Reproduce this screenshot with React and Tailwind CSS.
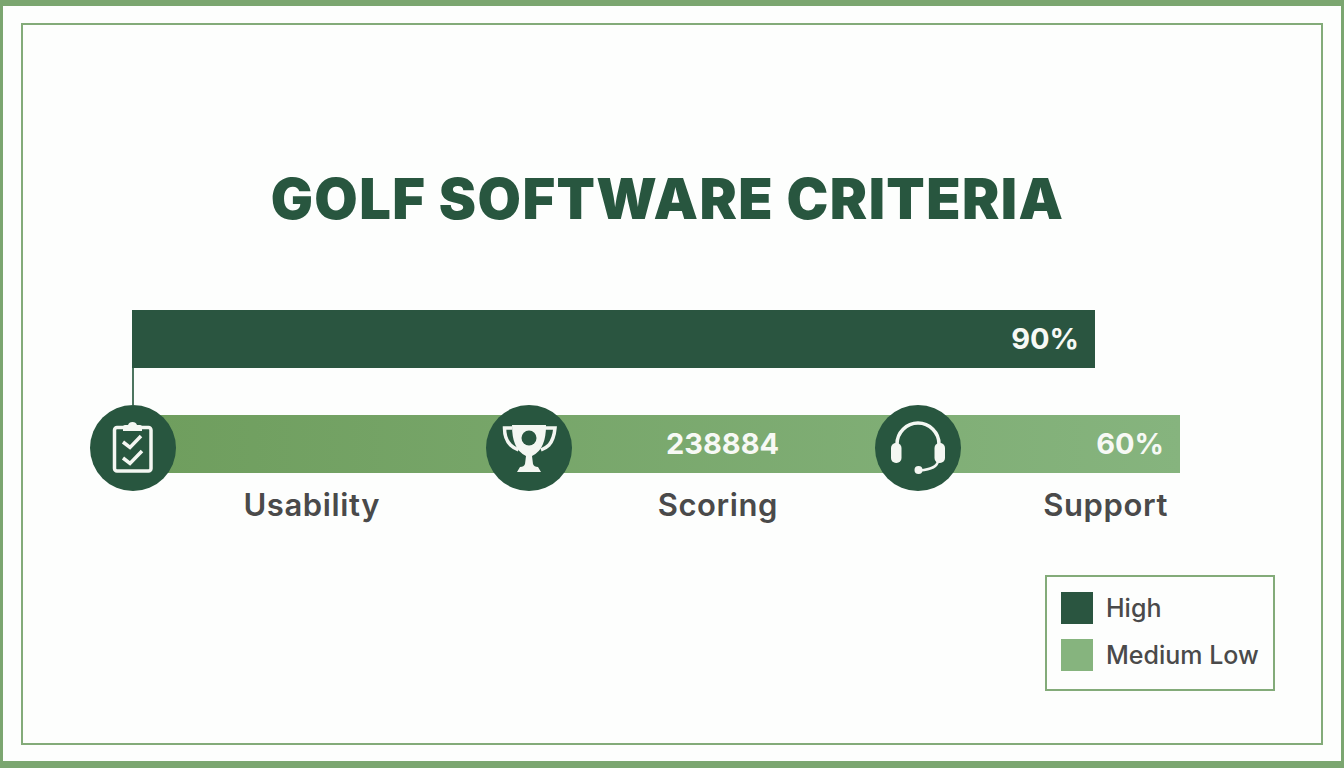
function ClipboardIcon() {
  return (
    <svg viewBox="0 0 86 86" className="h-full w-full" fill="none">
      <rect x="24.5" y="22.5" width="36.5" height="43.5" rx="2.5" stroke="#f4f7f2" strokeWidth="3.500" />
      <path d="M33 26v-4q0-2 2-2h3q1-3 4.500-3t4.500 3h3q2 0 2 2v4z" fill="#f4f7f2" />
      <path d="M33 37l7 5.500 11-11.500M33 53l7 5.500 12-12.500" stroke="#f4f7f2" strokeWidth="3.500" />
    </svg>
  );
}

function TrophyIcon() {
  return (
    <svg viewBox="0 0 86 86" className="h-full w-full" fill="none">
      <path d="M26 20h34q0 12-3 19-3 8-11 12l1 8q1 3 5 3l3 5H31l3-5q4 0 5-3l1-8q-8-4-11-12-3-7-3-19z" fill="#f4f7f2" />
      <circle cx="43" cy="33" r="7.500" fill="#28563f" />
      <path d="M26 23H18.500q0 11 6 17 3 3 8 5M59 23h10q-1 11-6 17-3 3-8 5" stroke="#f4f7f2" strokeWidth="3.500" />
    </svg>
  );
}

function HeadsetIcon() {
  return (
    <svg viewBox="0 0 86 86" className="h-full w-full" fill="none">
      <path d="M22 42v-3a21 21 0 0 1 42 0v3" stroke="#f4f7f2" strokeWidth="3.500" />
      <rect x="16" y="38" width="10.500" height="20" rx="5" fill="#f4f7f2" />
      <rect x="59.500" y="38" width="10.500" height="20" rx="5" fill="#f4f7f2" />
      <path d="M63 56q-1 8-18 9.500" stroke="#f4f7f2" strokeWidth="2.500" />
      <circle cx="43.500" cy="65" r="4" fill="#f4f7f2" />
    </svg>
  );
}

function IconCircle({ className, children }) {
  return (
    <div className={`absolute top-0 h-[86px] w-[86px] rounded-full bg-[#28563f] ${className}`}>
      {children}
    </div>
  );
}

export default function App() {
  return (
    <div className="h-screen w-full overflow-hidden bg-[#fdfefd] font-['Inter',sans-serif]">
      <div className="h-full border-x-[3px] border-t-[6px] border-b-[7px] border-[#7ba670] pt-[17px] pr-[18px] pb-[16px] pl-[18px]">
        <div className="flex h-full flex-col border-2 border-[#83ab79]">
          <h1 className="mt-[142px] pr-[9px] text-center text-[56px] leading-[64px] font-black tracking-[1.4px] text-[#28563f]">
            GOLF SOFTWARE CRITERIA
          </h1>

          <div className="mt-[79px] ml-[109px] flex h-[58px] w-[963px] items-center justify-end bg-[#2a5540] pr-[16px] text-[29px] font-bold text-[#f7f9f5]">
            90%
          </div>
          <div className="ml-[109px] h-[37px] w-[2px] bg-[#4d7560]"></div>

          <div className="relative ml-[67px] w-[1090px] py-[10px]">
            <div className="ml-[70px] flex h-[58px] items-center justify-end gap-[317px] bg-gradient-to-r from-[#6f9e5e] to-[#86b47e] pr-[16px] text-[29px] font-bold text-[#f7f9f5]">
              <span>238884</span>
              <span>60%</span>
            </div>
            <IconCircle className="left-0">
              <ClipboardIcon />
            </IconCircle>
            <IconCircle className="left-[396px]">
              <TrophyIcon />
            </IconCircle>
            <IconCircle className="left-[785px]">
              <HeadsetIcon />
            </IconCircle>
          </div>

          <div className="mt-[4px] ml-[67px] grid grid-cols-[290px_398px_390px] text-right text-[31px] leading-[36px] font-semibold tracking-[0.6px] text-[#4a4a4a]">
            <span>Usability</span>
            <span>Scoring</span>
            <span>Support</span>
          </div>

          <div className="mt-[52px] mr-[46px] ml-auto flex h-[116px] w-[230px] flex-col gap-[15px] border-2 border-[#83ab79] px-[14px] py-[15px] text-[25px] leading-[32px] font-medium text-[#4a4a4a]">
            <div className="flex items-center gap-[13px]">
              <div className="h-[32px] w-[32px] bg-[#2a5540]"></div>
              <span>High</span>
            </div>
            <div className="flex items-center gap-[13px]">
              <div className="h-[32px] w-[32px] bg-[#86b47e]"></div>
              <span>Medium Low</span>
            </div>
          </div>
        </div>
      </div>
    </div>
  );
}
